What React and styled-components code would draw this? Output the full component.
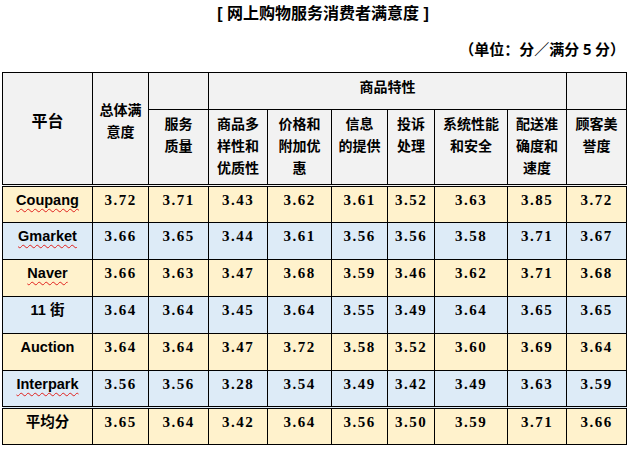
import React from 'react';
import styled, {createGlobalStyle} from 'styled-components';

const GlobalStyle = createGlobalStyle`
    body {
        margin: 0;
        background: #ffffff;
        font-family: "Liberation Sans", "Noto Sans CJK SC", sans-serif;
        color: #000;
    }
`;

const Page = styled.div`
    width: 630px;
    padding: 4px 0 0 2px;
    box-sizing: border-box;
`;

const Title = styled.h1`
    margin: 0;
    font-size: 16px;
    line-height: 20px;
    font-weight: bold;
    text-align: center;
    padding-left: 14px;
`;

const Unit = styled.div`
    margin-top: 15px;
    font-size: 15px;
    line-height: 20px;
    font-weight: bold;
    text-align: right;
    padding-right: 5px;
    font-family: "Noto Sans CJK SC", sans-serif;
`;

const Table = styled.table`
    margin-top: 13px;
    border-collapse: collapse;
    table-layout: fixed;
    width: 624px;
    border: 1px solid #000;
`;

const Head = styled.th`
    background: #f2f2f2;
    border: 1px solid #000;
    border-bottom: ${p => (p.$last ? '3px double #000' : '1px solid #000')};
    font-family: "Noto Sans CJK SC", sans-serif;
    font-size: ${p => (p.$big ? '16px' : '14px')};
    font-weight: bold;
    line-height: 22px;
    vertical-align: ${p => (p.$middle ? 'middle' : 'top')};
    padding: ${p => (p.$middle ? '0 0 18px 0' : '2px 0 0 0')};
    text-align: center;
`;

const Row = styled.tr`
    height: 37px;
    background: ${p => (p.$tone === 'blue' ? '#ddebf7' : '#fff2cc')};
`;

const Cell = styled.td`
    border: 1px solid #000;
    border-bottom: ${p => (p.$double ? '3px double #000' : '1px solid #000')};
    vertical-align: top;
    text-align: center;
    padding: 3px 0 0 0;
    line-height: 20px;
    font-family: "Liberation Serif", serif;
    font-size: 15px;
    letter-spacing: 1.5px;
    font-weight: bold;
`;

const Name = styled(Cell)`
    font-family: "Liberation Sans", "Noto Sans CJK SC", sans-serif;
    font-size: 14.5px;
    letter-spacing: 0;
`;

const Squiggle = styled.span`
    text-decoration: underline wavy #e0201c;
    text-decoration-thickness: 1px;
    text-underline-offset: 3px;
`;

const widths = [90, 56, 60, 59, 64, 56, 47, 73, 59, 60];

const rows = [
    {name: 'Coupang', mark: true, v: ['3.72', '3.71', '3.43', '3.62', '3.61', '3.52', '3.63', '3.85', '3.72']},
    {name: 'Gmarket', mark: true, v: ['3.66', '3.65', '3.44', '3.61', '3.56', '3.56', '3.58', '3.71', '3.67']},
    {name: 'Naver', mark: true, v: ['3.66', '3.63', '3.47', '3.68', '3.59', '3.46', '3.62', '3.71', '3.68']},
    {name: '11 街', mark: false, v: ['3.64', '3.64', '3.45', '3.64', '3.55', '3.49', '3.64', '3.65', '3.65']},
    {name: 'Auction', mark: false, v: ['3.64', '3.64', '3.47', '3.72', '3.58', '3.52', '3.60', '3.69', '3.64']},
    {name: 'Interpark', mark: true, v: ['3.56', '3.56', '3.28', '3.54', '3.49', '3.42', '3.49', '3.63', '3.59']},
    {name: '平均分', mark: false, v: ['3.65', '3.64', '3.42', '3.64', '3.56', '3.50', '3.59', '3.71', '3.66']},
];

const subHeads = [
    ['服务', '质量'],
    ['商品多', '样性和', '优质性'],
    ['价格和', '附加优', '惠'],
    ['信息', '的提供'],
    ['投诉', '处理'],
    ['系统性能', '和安全'],
    ['配送准', '确度和', '速度'],
];

export default function App() {
    return (
        <Page>
            <GlobalStyle />
            <Title>[ 网上购物服务消费者满意度 ]</Title>
            <Unit>（单位：分／满分 5 分）</Unit>
            <Table>
                <colgroup>
                    {widths.map((w, i) => <col key={i} style={{width: w}} />)}
                </colgroup>
                <thead>
                    <tr style={{height: 37}}>
                        <Head rowSpan={2} $middle $big $last>平台</Head>
                        <Head rowSpan={2} $middle $last>总体满<br />意度</Head>
                        <Head />
                        <Head colSpan={6}>商品特性</Head>
                        <Head />
                    </tr>
                    <tr style={{height: 76}}>
                        {subHeads.map((lines, i) => (
                            <Head key={i} $last>
                                {lines.map((l, j) => <React.Fragment key={j}>{l}{j < lines.length - 1 && <br />}</React.Fragment>)}
                            </Head>
                        ))}
                        <Head $last>顾客美<br />誉度</Head>
                    </tr>
                </thead>
                <tbody>
                    {rows.map((r, i) => {
                        const double = i === rows.length - 2;
                        return (
                            <Row key={r.name} $tone={i % 2 ? 'blue' : 'yellow'}>
                                <Name $double={double}>
                                    {r.mark ? <Squiggle>{r.name}</Squiggle> : r.name}
                                </Name>
                                {r.v.map((x, j) => <Cell key={j} $double={double}>{x}</Cell>)}
                            </Row>
                        );
                    })}
                </tbody>
            </Table>
        </Page>
    );
}
